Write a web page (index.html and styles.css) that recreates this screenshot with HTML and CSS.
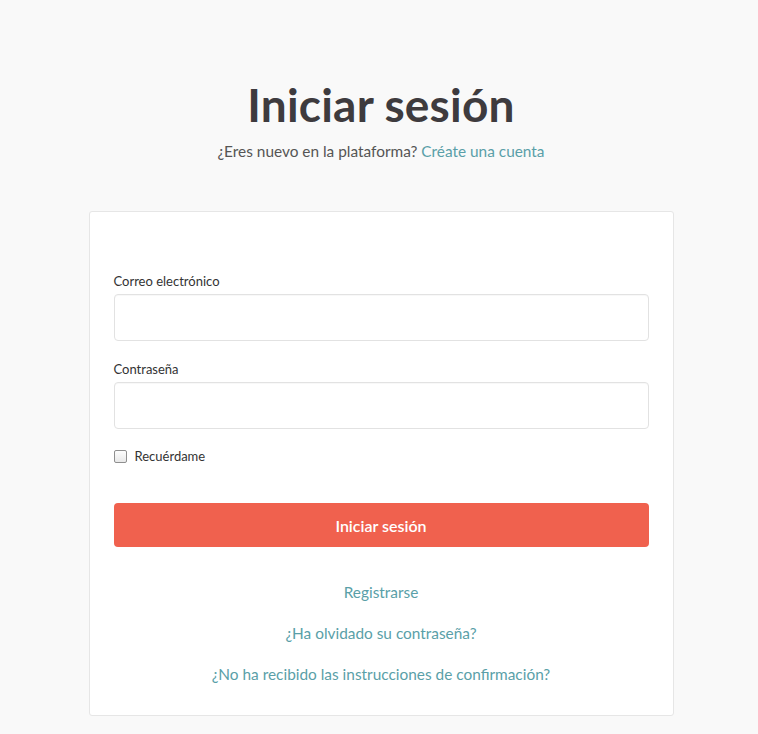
FILE: index.html
```html
<!DOCTYPE html>
<html lang="es">
<head>
<meta charset="utf-8">
<title>Iniciar sesión</title>
<link rel="stylesheet" href="styles.css">
</head>
<body>
<main class="page">
  <header class="head">
    <h1 class="title">Iniciar sesión</h1>
    <p class="subtitle">¿Eres nuevo en la plataforma? <a href="#" class="link">Créate una cuenta</a></p>
  </header>
  <section class="card">
    <form class="form">
      <div class="field">
        <label class="label" for="email">Correo electrónico</label>
        <input class="input" id="email" type="email">
      </div>
      <div class="field">
        <label class="label" for="pass">Contraseña</label>
        <input class="input" id="pass" type="password">
      </div>
      <label class="remember"><span class="box"></span><span>Recuérdame</span></label>
      <button type="button" class="btn">Iniciar sesión</button>
    </form>
    <nav class="links">
      <a href="#" class="link">Registrarse</a>
      <a href="#" class="link">¿Ha olvidado su contraseña?</a>
      <a href="#" class="link">¿No ha recibido las instrucciones de confirmación?</a>
    </nav>
  </section>
</main>
</body>
</html>
```
FILE: styles.css
```css
* { box-sizing: border-box; }
html, body { margin: 0; padding: 0; }
body {
  background: #f9f9f9;
  font-family: "Source Sans Pro", Lato, "Open Sans", sans-serif;
  color: #333;
}
.page {
  width: 585px;
  margin: 0 auto;
  padding: 77px 0 20px;
  position: relative;
  left: 2px;
}
.head { text-align: center; }
.title {
  margin: 0;
  font-size: 46px;
  line-height: 56px;
  font-weight: 700;
  color: #3e3b3e;
  letter-spacing: 0.2px;
}
.subtitle {
  margin: 8px 0 0;
  font-size: 15.4px;
  line-height: 20px;
  color: #555;
}
.link { color: #5a9fa8; text-decoration: none; }
.card {
  margin-top: 50px;
  background: #fff;
  border: 1px solid #e6e6e6;
  border-radius: 3px;
  padding: 60px 24px 31px;
}
.form { display: flex; flex-direction: column; }
.field { display: flex; flex-direction: column; }
.field + .field { margin-top: 19px; }
.label {
  font-size: 13px;
  line-height: 18px;
  margin-bottom: 4px;
  color: #333;
}
.input {
  height: 47px;
  border: 1px solid #e2e2e2;
  border-radius: 4px;
  background: #fff;
  box-shadow: inset 0 1px 1px rgba(0,0,0,0.03);
}
.remember {
  display: flex;
  align-items: center;
  gap: 8px;
  font-size: 13px;
  line-height: 18px;
  margin-top: 18px;
}
.box {
  width: 13px;
  height: 13px;
  border: 1px solid #8f8f8f;
  border-radius: 2px;
  background: linear-gradient(#fdfdfd, #e8e8e8);
}
.btn {
  margin-top: 38px;
  height: 44px;
  border: 0;
  border-radius: 4px;
  background: #f0614e;
  color: #fff;
  font-family: inherit;
  font-size: 16px;
  font-weight: 600;
}
.links {
  margin-top: 35px;
  display: flex;
  flex-direction: column;
  align-items: center;
  gap: 21px;
  font-size: 15.4px;
  line-height: 20px;
}
```
